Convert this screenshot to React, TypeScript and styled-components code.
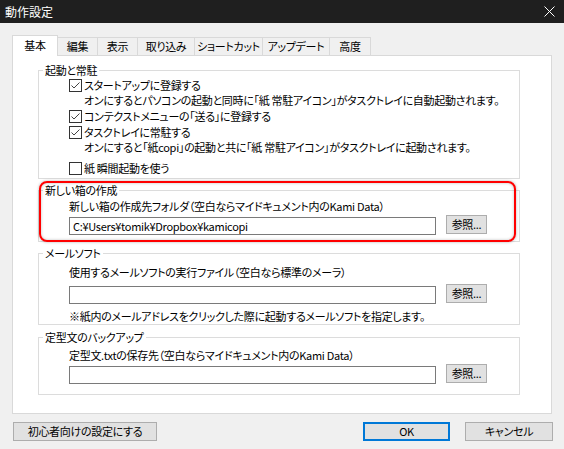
import styled, { createGlobalStyle } from "styled-components";

const GlobalStyle = createGlobalStyle`
  html, body {
    margin: 0;
    padding: 0;
    background: #f0f0f0;
  }
  body {
    font-family: "Noto Sans CJK JP", "Noto Sans", sans-serif;
    font-size: 11px;
    letter-spacing: -0.3px;
    font-feature-settings: "palt";
    color: #000;
  }
`;

const Window = styled.div`
  width: 564px;
  height: 449px;
  background: #f0f0f0;
  overflow: hidden;
`;

const TitleBar = styled.div`
  height: 23px;
  background: #1f1f1f;
  color: #fff;
  display: flex;
  align-items: center;
  justify-content: space-between;
  padding: 0 9px 0 5px;
  line-height: 23px;
  font-size: 12px;
  letter-spacing: 0;
`;

const TabStrip = styled.div`
  display: flex;
  align-items: flex-end;
  margin: 12px 0 0 12px;
  height: 20px;
`;

const Tab = styled.div<{ $w: number; $active?: boolean }>`
  width: ${(p) => p.$w}px;
  box-sizing: border-box;
  height: ${(p) => (p.$active ? 21 : 18)}px;
  margin-bottom: ${(p) => (p.$active ? -1 : 0)}px;
  margin-left: -1px;
  background: ${(p) => (p.$active ? "#fff" : "#f0f0f0")};
  border: 1px solid #d9d9d9;
  border-bottom: none;
  position: relative;
  z-index: ${(p) => (p.$active ? 2 : 1)};
  text-align: center;
  white-space: nowrap;
  line-height: ${(p) => (p.$active ? 19 : 17)}px;
  &:first-child {
    margin-left: 0;
  }
`;

const Panel = styled.div`
  margin-left: 12px;
  width: 540px;
  height: 359px;
  box-sizing: border-box;
  background: #fff;
  border: 1px solid #d9d9d9;
  padding: 7px 0 0 25px;
`;

const Group = styled.fieldset<{ $mt?: number }>`
  margin: ${(p) => p.$mt ?? 0}px 0 0 0;
  padding: 0;
  width: 482px;
  box-sizing: border-box;
  border: 1px solid #dcdcdc;
  min-inline-size: 0;
`;

const Legend = styled.legend`
  margin-left: 4px;
  padding: 0 2px;
  line-height: 14px;
  height: 14px;
`;

const GroupBody = styled.div<{ $pt: number; $pb: number }>`
  padding: ${(p) => p.$pt}px 0 ${(p) => p.$pb}px 30px;
`;

const Line = styled.div<{ $mt?: number }>`
  line-height: 15px;
  height: 15px;
  margin-top: ${(p) => p.$mt ?? 0}px;
  white-space: nowrap;
`;

const CheckItem = styled.div<{ $mt?: number }>`
  display: flex;
  align-items: flex-start;
  margin-top: ${(p) => p.$mt ?? 0}px;
`;

const Box = styled.span`
  width: 13px;
  height: 13px;
  box-sizing: border-box;
  border: 1px solid #333;
  background: #fff;
  margin-top: 1px;
  margin-right: 2px;
  flex: none;
  display: flex;
  align-items: center;
  justify-content: center;
`;

const PathRow = styled.div<{ $mt: number }>`
  display: flex;
  align-items: flex-start;
  margin-top: ${(p) => p.$mt}px;
`;

const TextInput = styled.div`
  width: 367px;
  height: 18px;
  box-sizing: border-box;
  border: 1px solid #7a7a7a;
  background: #fff;
  padding-left: 3px;
  line-height: 16px;
  white-space: nowrap;
`;

const Button = styled.div<{ $w: number; $focus?: boolean }>`
  width: ${(p) => p.$w}px;
  height: 19px;
  box-sizing: border-box;
  background: #e1e1e1;
  border: ${(p) => (p.$focus ? "2px solid #0078d7" : "1px solid #adadad")};
  text-align: center;
  line-height: ${(p) => (p.$focus ? 15 : 17)}px;
  white-space: nowrap;
`;

const BrowseButton = styled(Button)`
  margin: -2px 0 0 10px;
`;

const CancelButton = styled(Button)`
  margin-left: 15px;
`;

const Highlight = styled.div`
  position: relative;
  margin-top: 4px;
`;

const RedFrame = styled.div`
  position: absolute;
  left: 1px;
  top: -2px;
  width: 477px;
  height: 61px;
  box-sizing: border-box;
  border: 2px solid #ff0000;
  border-radius: 8px;
  box-shadow: 0 0 3px rgba(0, 0, 0, 0.3), inset 0 0 3px rgba(0, 0, 0, 0.25);
  pointer-events: none;
`;

const Footer = styled.div`
  display: flex;
  margin: 8px 11px 0 13px;
`;

const Spacer = styled.div`
  flex: 1;
`;

const Check = ({ on }: { on?: boolean }) => (
  <Box>
    {on && (
      <svg width="11" height="11" viewBox="0 0 11 11">
        <polyline points="1.5,5.5 4,8 9.5,2.5" fill="none" stroke="#444" strokeWidth="1" />
      </svg>
    )}
  </Box>
);

const tabs: [string, number][] = [
  ["基本", 46],
  ["編集", 41],
  ["表示", 41],
  ["取り込み", 58],
  ["ショートカット", 69],
  ["アップデート", 68],
  ["高度", 42],
];

export default function App() {
  return (
    <Window>
      <GlobalStyle />
      <TitleBar>
        <span>動作設定</span>
        <svg width="11" height="11" viewBox="0 0 11 11">
          <path d="M0.5 0.5 L10.5 10.5 M10.5 0.5 L0.5 10.5" stroke="#fff" strokeWidth="1" />
        </svg>
      </TitleBar>

      <TabStrip>
        {tabs.map(([t, w], i) => (
          <Tab key={t} $w={w} $active={i === 0}>
            {t}
          </Tab>
        ))}
      </TabStrip>

      <Panel>
        <Group>
          <Legend>起動と常駐</Legend>
          <GroupBody $pt={1} $pb={2}>
            <CheckItem>
              <Check on />
              <div>
                <Line>スタートアップに登録する</Line>
                <Line>オンにするとパソコンの起動と同時に「紙 常駐アイコン」がタスクトレイに自動起動されます。</Line>
              </div>
            </CheckItem>
            <CheckItem $mt={1}>
              <Check on />
              <Line>コンテクストメニューの「送る」に登録する</Line>
            </CheckItem>
            <CheckItem $mt={1}>
              <Check on />
              <div>
                <Line>タスクトレイに常駐する</Line>
                <Line>オンにすると「紙copi」の起動と共に「紙 常駐アイコン」がタスクトレイに起動されます。</Line>
              </div>
            </CheckItem>
            <CheckItem $mt={6}>
              <Check />
              <Line>紙 瞬間起動を使う</Line>
            </CheckItem>
          </GroupBody>
        </Group>

        <Highlight>
          <Group>
            <Legend>新しい箱の作成</Legend>
            <GroupBody $pt={2} $pb={6}>
              <Line>新しい箱の作成先フォルダ（空白ならマイドキュメント内のKami Data）</Line>
              <PathRow $mt={3}>
                <TextInput>C:¥Users¥tomik¥Dropbox¥kamicopi</TextInput>
                <BrowseButton $w={41}>参照...</BrowseButton>
              </PathRow>
            </GroupBody>
          </Group>
          <RedFrame />
        </Highlight>

        <Group $mt={4}>
          <Legend>メールソフト</Legend>
          <GroupBody $pt={5} $pb={0}>
            <Line>使用するメールソフトの実行ファイル（空白なら標準のメーラ）</Line>
            <PathRow $mt={6}>
              <TextInput />
              <BrowseButton $w={41}>参照...</BrowseButton>
            </PathRow>
            <Line $mt={5}>※紙内のメールアドレスをクリックした際に起動するメールソフトを指定します。</Line>
          </GroupBody>
        </Group>

        <Group $mt={5}>
          <Legend>定型文のバックアップ</Legend>
          <GroupBody $pt={4} $pb={10}>
            <Line>定型文.txtの保存先（空白ならマイドキュメント内のKami Data）</Line>
            <PathRow $mt={3}>
              <TextInput />
              <BrowseButton $w={41}>参照...</BrowseButton>
            </PathRow>
          </GroupBody>
        </Group>
      </Panel>

      <Footer>
        <Button $w={144}>初心者向けの設定にする</Button>
        <Spacer />
        <Button $w={87} $focus>
          OK
        </Button>
        <CancelButton $w={88}>キャンセル</CancelButton>
      </Footer>
    </Window>
  );
}
